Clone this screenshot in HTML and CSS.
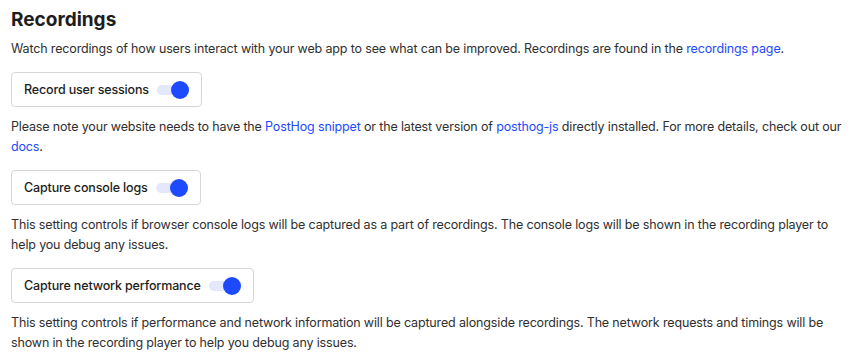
FILE: index.html
```html
<!DOCTYPE html>
<html lang="en">
<head>
    <meta charset="UTF-8">
    <meta name="viewport" content="width=device-width, initial-scale=1.0">
    <title>Recordings settings</title>
    <link rel="stylesheet" href="styles.css">
</head>
<body>
    <div class="section">
        <h2>Recordings</h2>
        <p>Watch recordings of how users interact with your web app to see what can be improved. Recordings are found in the <a href="#">recordings page</a>.</p>

        <label class="switch-box">
            <span>Record user sessions</span>
            <span class="switch"><span class="handle"></span></span>
        </label>
        <p>Please note your website needs to have the <a href="#">PostHog snippet</a> or the latest version of <a href="#">posthog-js</a> directly installed. For more details, check out our <a href="#">docs</a>.</p>

        <label class="switch-box">
            <span>Capture console logs</span>
            <span class="switch"><span class="handle"></span></span>
        </label>
        <p>This setting controls if browser console logs will be captured as a part of recordings. The console logs will be shown in the recording player to help you debug any issues.</p>

        <label class="switch-box">
            <span>Capture network performance</span>
            <span class="switch"><span class="handle"></span></span>
        </label>
        <p>This setting controls if performance and network information will be captured alongside recordings. The network requests and timings will be shown in the recording player to help you debug any issues.</p>
    </div>
</body>
</html>
```

FILE: styles.css
```css
body {
    font-family: Inter, "Noto Sans", sans-serif;
    color: #2f2f2f;
    background-color: #fff;
    margin: 0;
    padding: 0 11px;
}

.section {
    max-width: 842px;
}

h2 {
    font-size: 19px;
    font-weight: 700;
    color: #1d1d1d;
    line-height: 22px;
    margin: 9px 0 0;
}

p {
    font-size: 12.5px;
    letter-spacing: -0.15px;
    line-height: 20px;
    margin: 10px 0 0;
}

h2 + p {
    margin-top: 8px;
}

a {
    color: #1d4aff;
    text-decoration: none;
}

.switch-box {
    display: inline-flex;
    align-items: center;
    gap: 8px;
    height: 35px;
    box-sizing: border-box;
    padding: 0 12px;
    margin-top: 13px;
    border: 1px solid #d6d6d6;
    border-radius: 4px;
    font-size: 12.5px;
    letter-spacing: -0.15px;
    font-weight: 500;
    color: #1d1d1d;
}

.switch {
    display: flex;
    align-items: center;
    justify-content: flex-end;
    width: 32px;
    height: 10px;
    border-radius: 5px;
    background-color: #e3e8fd;
}

.handle {
    width: 18px;
    height: 18px;
    border-radius: 50%;
    background-color: #1d4aff;
}
```
